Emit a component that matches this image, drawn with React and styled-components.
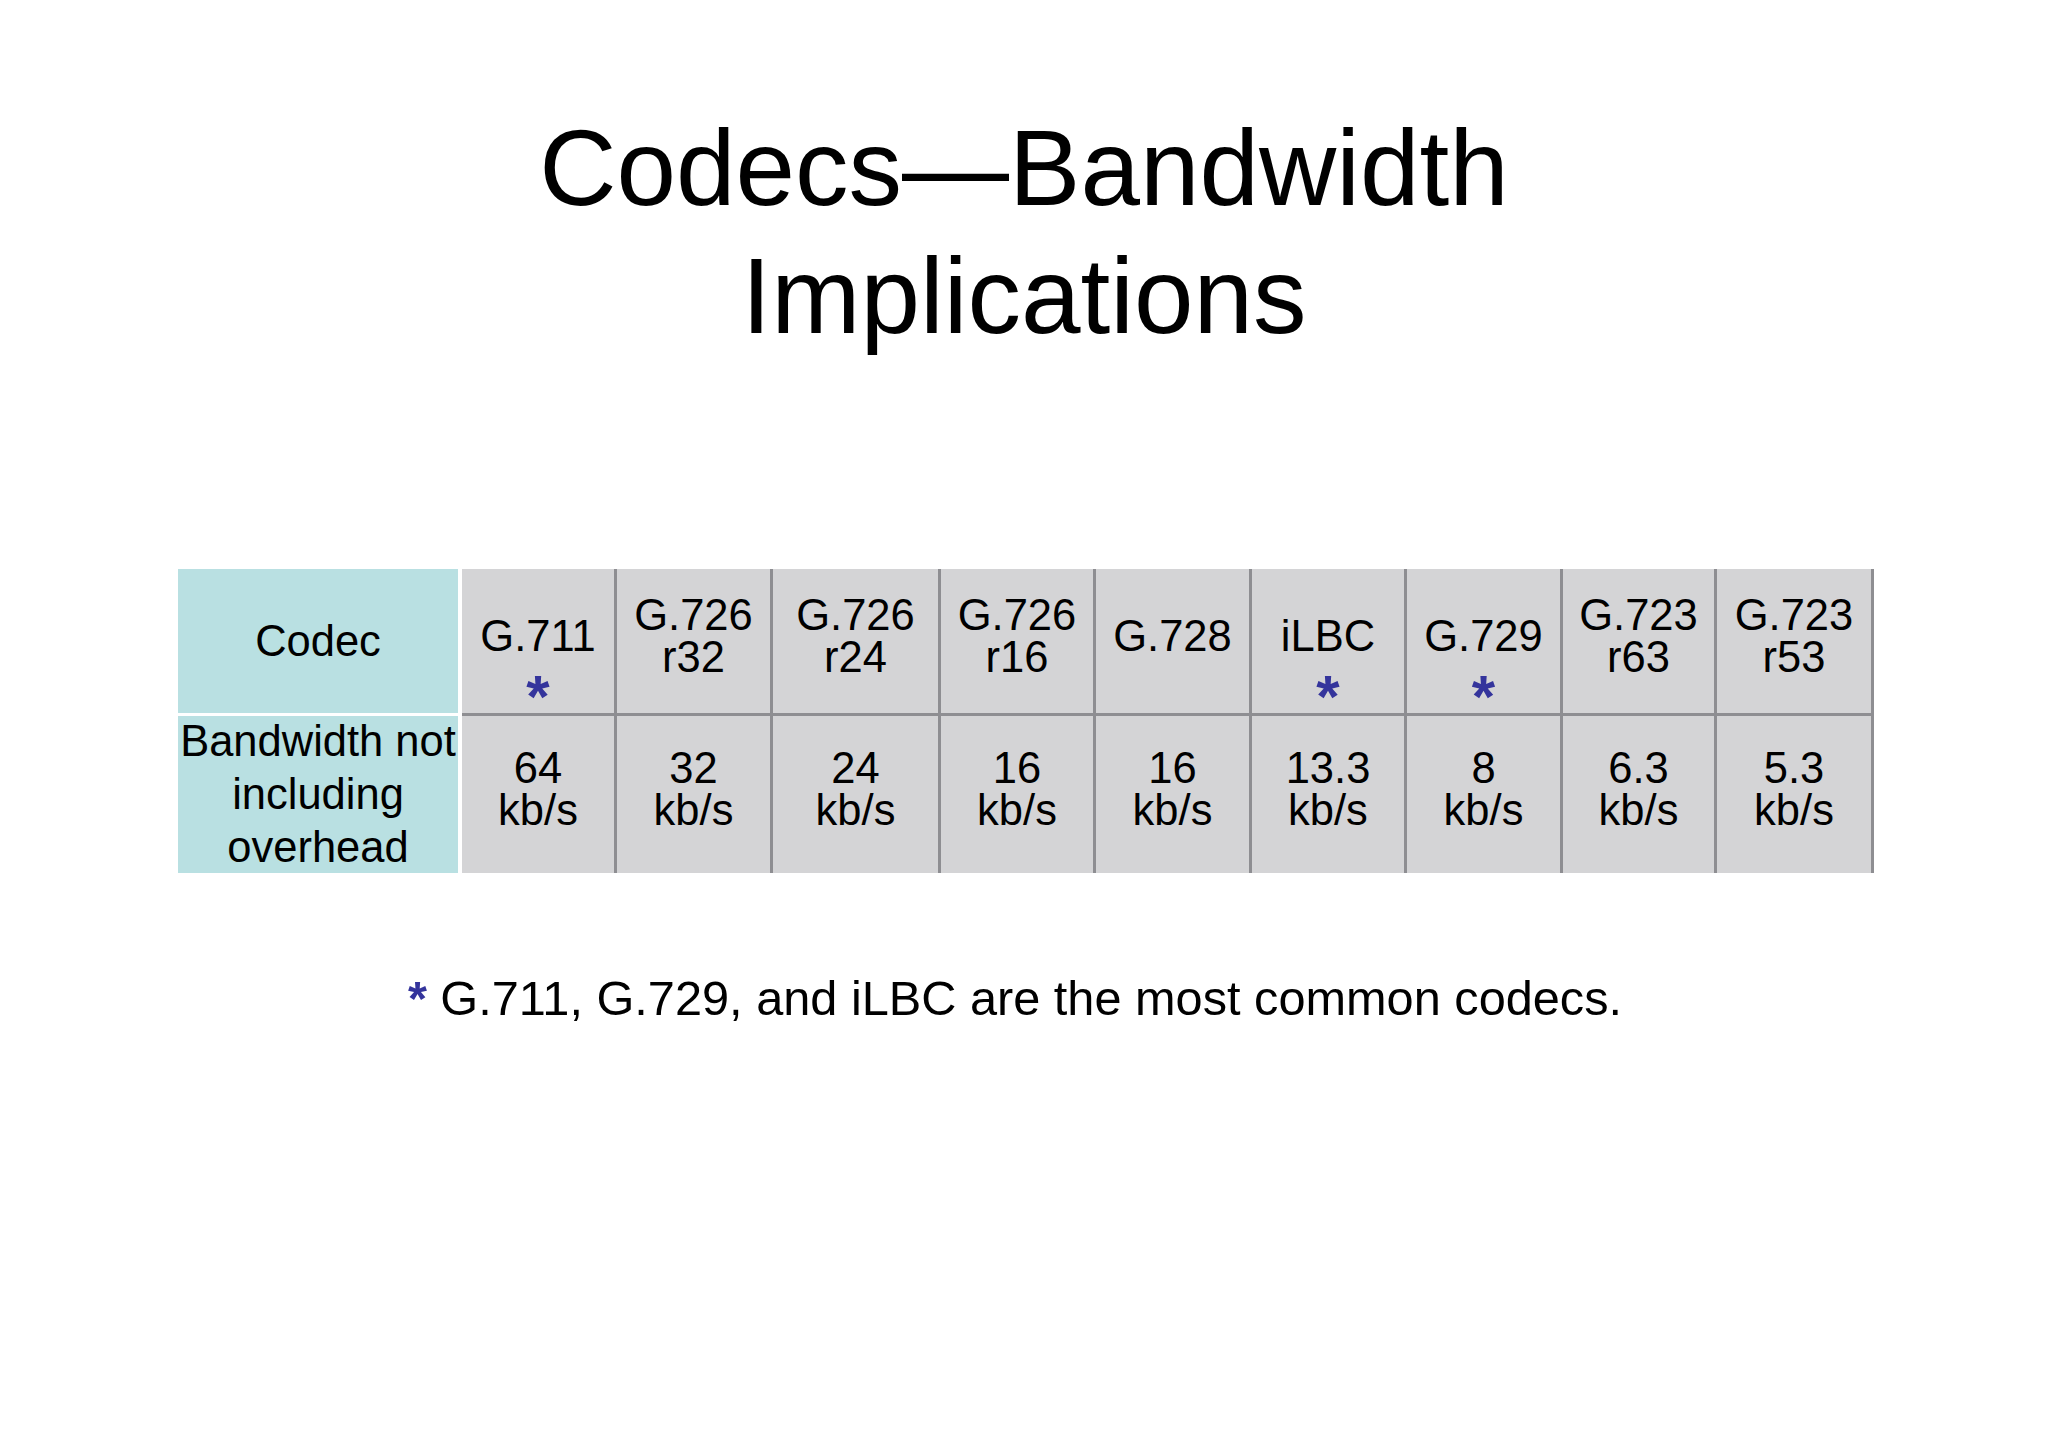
import React from "react";
import styled, { createGlobalStyle } from "styled-components";

const GlobalStyle = createGlobalStyle`
  html, body {
    margin: 0;
    padding: 0;
    background: #ffffff;
  }
  body {
    font-family: "Liberation Sans", Arial, sans-serif;
    color: #000000;
  }
`;

const Slide = styled.main`
  width: 2048px;
  height: 1447px;
  background: #ffffff;
  display: flex;
  flex-direction: column;
  align-items: center;
  overflow: hidden;
`;

const Title = styled.h1`
  margin: 0;
  padding-top: 104px;
  font-family: "Liberation Sans", Arial, sans-serif;
  font-weight: 400;
  font-size: 107px;
  line-height: 128px;
  text-align: center;
  color: #000000;
`;

const TableWrap = styled.div`
  margin-top: 209px;
  padding-left: 4px;
  display: flex;
  justify-content: center;
`;

const Grid = styled.div`
  display: grid;
  grid-template-columns: ${(p) => p.$cols};
  grid-template-rows: 147px 157px;
  font-family: "Liberation Sans", Arial, sans-serif;
  font-size: 43.5px;
  color: #000000;
`;

const LabelCell = styled.div`
  box-sizing: border-box;
  background: #b9e0e2;
  border-right: 4px solid #ffffff;
  border-bottom: ${(p) => (p.$top ? "3px solid #ffffff" : "none")};
  display: flex;
  flex-direction: column;
  align-items: center;
  justify-content: center;
  text-align: center;
  white-space: nowrap;
  line-height: ${(p) => (p.$top ? "42px" : "53px")};
`;

const DataCell = styled.div`
  box-sizing: border-box;
  background: #d4d4d6;
  border-right: 3px solid #8e8e92;
  border-bottom: ${(p) => (p.$top ? "3px solid #8e8e92" : "none")};
  display: flex;
  flex-direction: column;
  align-items: center;
  justify-content: center;
  text-align: center;
  white-space: nowrap;
  line-height: 42px;
  padding-bottom: ${(p) => (p.$top ? "11px" : "12px")};
`;

const Text = styled.span`
  display: block;
`;

const Star = styled.span`
  display: block;
  height: 0;
  line-height: 79px;
  font-size: 60px;
  font-weight: 700;
  color: #34349c;
`;

const Footnote = styled.p`
  margin: 97px 0 0 0;
  padding-right: 18px;
  font-family: "Liberation Sans", Arial, sans-serif;
  font-size: 48.7px;
  line-height: 56px;
  text-align: center;
  color: #000000;
`;

const FootStar = styled.span`
  font-weight: 700;
  color: #34349c;
`;

const columns = [
  { head: ["G.711"], star: true, value: "64", w: 155 },
  { head: ["G.726", "r32"], value: "32", w: 156 },
  { head: ["G.726", "r24"], value: "24", w: 168 },
  { head: ["G.726", "r16"], value: "16", w: 155 },
  { head: ["G.728"], value: "16", w: 156 },
  { head: ["iLBC"], star: true, value: "13.3", w: 155 },
  { head: ["G.729"], star: true, value: "8", w: 156 },
  { head: ["G.723", "r63"], value: "6.3", w: 154 },
  { head: ["G.723", "r53"], value: "5.3", w: 157 },
];

function Lines({ items }) {
  return (
    <Text>
      {items.map((t, i) => (
        <React.Fragment key={i}>
          {i > 0 && <br />}
          {t}
        </React.Fragment>
      ))}
    </Text>
  );
}

export default function App() {
  const cols = ["284px", ...columns.map((c) => `${c.w}px`)].join(" ");
  return (
    <>
      <GlobalStyle />
      <Slide>
        <Title>
          Codecs—Bandwidth
          <br />
          Implications
        </Title>
        <TableWrap>
          <Grid $cols={cols}>
            <LabelCell $top>
              <Text>Codec</Text>
            </LabelCell>
            {columns.map((c, i) => (
              <DataCell $top key={`h${i}`}>
                <Lines items={c.head} />
                {c.star && <Star>*</Star>}
              </DataCell>
            ))}
            <LabelCell>
              <Lines items={["Bandwidth not", "including", "overhead"]} />
            </LabelCell>
            {columns.map((c, i) => (
              <DataCell key={`v${i}`}>
                <Lines items={[c.value, "kb/s"]} />
              </DataCell>
            ))}
          </Grid>
        </TableWrap>
        <Footnote>
          <FootStar>*</FootStar> G.711, G.729, and iLBC are the most common
          codecs.
        </Footnote>
      </Slide>
    </>
  );
}
